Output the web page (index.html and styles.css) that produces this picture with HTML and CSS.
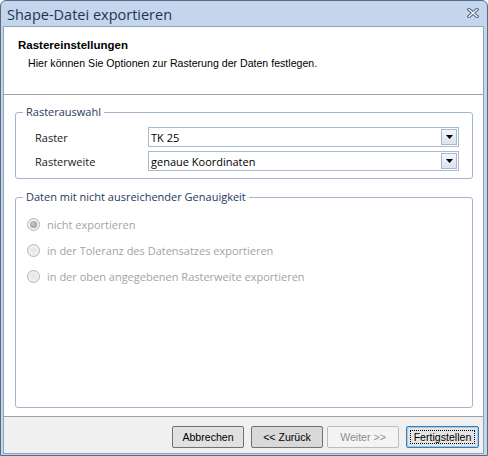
FILE: index.html
```
<!DOCTYPE html>
<html>
<head>
<meta charset="utf-8">
<link rel="stylesheet" href="styles.css">
</head>
<body>
<div class="window">
  <div class="titlebar">
    <span class="title">Shape-Datei exportieren</span>
    <svg class="close" width="12" height="10" viewBox="0 0 12 10">
      <path d="M2 1.5 L10 8.5 M10 1.5 L2 8.5" stroke="#55647a" stroke-width="3.4" stroke-linecap="square" fill="none"/>
      <path d="M2 1.5 L10 8.5 M10 1.5 L2 8.5" stroke="#f4f7fb" stroke-width="1.4" stroke-linecap="square" fill="none"/>
    </svg>
  </div>
  <div class="client">
    <div class="header">
      <div class="h-title">Rastereinstellungen</div>
      <div class="h-desc">Hier können Sie Optionen zur Rasterung der Daten festlegen.</div>
    </div>
    <div class="body">
      <fieldset class="group g1">
        <legend>Rasterauswahl</legend>
        <div class="row">
          <span class="lbl">Raster</span>
          <div class="combo"><span class="val">TK 25</span><span class="ddbtn"><svg width="7" height="4" viewBox="0 0 7 4"><path d="M0 0 H7 L3.5 4 Z" fill="#000"/></svg></span></div>
        </div>
        <div class="row">
          <span class="lbl">Rasterweite</span>
          <div class="combo"><span class="val">genaue Koordinaten</span><span class="ddbtn"><svg width="7" height="4" viewBox="0 0 7 4"><path d="M0 0 H7 L3.5 4 Z" fill="#000"/></svg></span></div>
        </div>
      </fieldset>
      <fieldset class="group g2">
        <legend>Daten mit nicht ausreichender Genauigkeit</legend>
        <div class="radio"><span class="rb checked"></span><span>nicht exportieren</span></div>
        <div class="radio"><span class="rb"></span><span>in der Toleranz des Datensatzes exportieren</span></div>
        <div class="radio"><span class="rb"></span><span>in der oben angegebenen Rasterweite exportieren</span></div>
      </fieldset>
    </div>
    <div class="buttons">
      <div class="btn">Abbrechen</div>
      <div class="btn pressed">&lt;&lt; Zurück</div>
      <div class="btn disabled">Weiter &gt;&gt;</div>
      <div class="btn default"><span class="focus">Fertigstellen</span></div>
    </div>
  </div>
</div>
</body>
</html>
```
FILE: styles.css
```
html, body {
  margin: 0;
  padding: 0;
  background: #ffffff;
}
.window {
  width: 488px;
  height: 456px;
  box-sizing: border-box;
  border: 1px solid #5b6a7d;
  border-radius: 6px 6px 0 0;
  background: #c4d6ed;
  padding: 0 3px 1px 2px;
  display: flex;
  flex-direction: column;
}
.titlebar {
  height: 25px;
  flex: none;
  display: flex;
  align-items: center;
  justify-content: space-between;
  padding: 0 4px 0 4px;
}
.title {
  font-family: "Open Sans", sans-serif;
  font-size: 14.5px;
  color: #1e3552;
  margin-top: 1px;
}
.close {
  margin-top: -2px;
  margin-right: 1px;
}
.client {
  flex: 1;
  border: 1px solid #8ea3bd;
  background: #ffffff;
  display: flex;
  flex-direction: column;
  min-height: 0;
}
.header {
  height: 68px;
  flex: none;
  border-bottom: 1px solid #a0a0a0;
  box-sizing: border-box;
  font-family: "Liberation Sans", Arial, sans-serif;
  font-size: 10.6px;
  color: #000;
}
.h-title {
  font-weight: bold;
  font-size: 11.5px;
  line-height: 14px;
  padding: 11px 0 0 14px;
}
.h-desc {
  line-height: 14px;
  margin-top: 4px;
  padding-left: 24px;
}
.body {
  flex: 1;
  display: flex;
  flex-direction: column;
  gap: 10px;
  padding: 9px 10px 8px 11px;
  font-family: "Open Sans", sans-serif;
  font-size: 11px;
  min-height: 0;
}
.group {
  margin: 0;
  border: 1px solid #a3b4cb;
  border-radius: 3px;
  padding: 7px 12px 7px 19px;
  min-width: 0;
}
.group legend {
  color: #1e395b;
  padding: 0 3px;
  margin-left: -12px;
  line-height: 16px;
}
.row {
  display: flex;
  align-items: center;
  height: 20px;
}
.row + .row {
  margin-top: 4px;
}
.lbl {
  width: 113px;
  color: #1a1a1a;
}
.combo {
  width: 311px;
  height: 20px;
  box-sizing: border-box;
  border: 1px solid #abbad0;
  display: flex;
  align-items: center;
  justify-content: space-between;
  padding: 0 1px 0 2px;
  color: #000;
}
.ddbtn {
  width: 16px;
  height: 16px;
  box-sizing: border-box;
  border: 1px solid #a6b8cf;
  background: linear-gradient(#f3f6fb, #dae3ef);
  display: flex;
  align-items: center;
  justify-content: center;
}
.g1 {
  flex: none;
}
.g2 {
  flex: 1;
  padding: 6px 12px 0 11px;
}
.g2 legend {
  margin-left: -4px;
}
.radio {
  display: flex;
  align-items: center;
  height: 26px;
  color: #a3a3a3;
}
.rb {
  width: 11px;
  height: 11px;
  border: 1px solid #b4b4b4;
  border-radius: 50%;
  background: radial-gradient(circle at 50% 50%, #e6e6e6, #f6f6f6);
  margin-right: 7px;
  position: relative;
  flex: none;
}
.rb.checked::after {
  content: "";
  position: absolute;
  left: 2px;
  top: 2px;
  width: 7px;
  height: 7px;
  border-radius: 50%;
  background: radial-gradient(circle at 40% 40%, #c8c8c8, #8f8f8f);
}
.buttons {
  flex: none;
  height: 37px;
  box-sizing: border-box;
  border-top: 1px solid #a0a0a0;
  background: #f0f0f0;
  display: flex;
  justify-content: flex-end;
  align-items: flex-start;
  padding: 9px 4px 0 0;
  gap: 4px;
  font-family: "Liberation Sans", Arial, sans-serif;
  font-size: 10.6px;
}
.btn {
  width: 72px;
  height: 22px;
  box-sizing: border-box;
  border: 1px solid #707070;
  border-radius: 2px;
  background: #e1e1e1;
  color: #000;
  display: flex;
  align-items: center;
  justify-content: center;
}
.btn:first-child {
  margin-right: 3px;
}
.btn.pressed {
  background: #d9d9d9;
}
.btn.disabled {
  border-color: #bcbcbc;
  background: #f4f4f4;
  color: #8d8d8d;
}
.btn.default {
  margin-left: 3px;
  width: 73px;
  border: 1px solid #2f7fc0;
  box-shadow: inset 0 0 0 1px #a8cbe8;
  background: #e5e5e5;
}
.focus {
  border: 1px dotted #000;
  padding: 0 3px;
  height: 14px;
  box-sizing: border-box;
  display: flex;
  align-items: center;
  justify-content: center;
}
```
